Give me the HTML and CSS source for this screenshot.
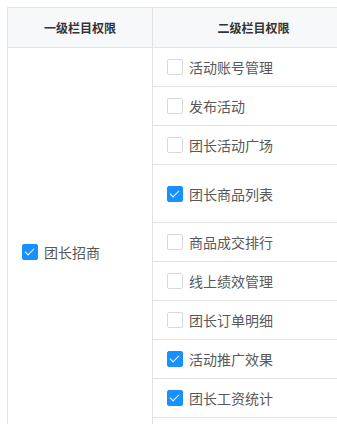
FILE: index.html
```html
<!DOCTYPE html>
<html lang="zh-CN">
<head>
    <meta charset="UTF-8">
    <meta name="viewport" content="width=device-width, initial-scale=1.0">
    <title>栏目权限</title>
    <link rel="stylesheet" href="styles.css">
</head>
<body>
    <table class="perm-table">
        <thead>
            <tr>
                <th class="col-first">一级栏目权限</th>
                <th class="col-second">二级栏目权限</th>
            </tr>
        </thead>
        <tbody>
            <tr>
                <td class="col-first" rowspan="10">
                    <label class="check-item"><span class="checkbox checked"></span>团长招商</label>
                </td>
                <td><label class="check-item"><span class="checkbox"></span>活动账号管理</label></td>
            </tr>
            <tr>
                <td><label class="check-item"><span class="checkbox"></span>发布活动</label></td>
            </tr>
            <tr>
                <td><label class="check-item"><span class="checkbox"></span>团长活动广场</label></td>
            </tr>
            <tr class="tall-row">
                <td><label class="check-item"><span class="checkbox checked"></span>团长商品列表</label></td>
            </tr>
            <tr>
                <td><label class="check-item"><span class="checkbox"></span>商品成交排行</label></td>
            </tr>
            <tr>
                <td><label class="check-item"><span class="checkbox"></span>线上绩效管理</label></td>
            </tr>
            <tr>
                <td><label class="check-item"><span class="checkbox"></span>团长订单明细</label></td>
            </tr>
            <tr>
                <td><label class="check-item"><span class="checkbox checked"></span>活动推广效果</label></td>
            </tr>
            <tr>
                <td><label class="check-item"><span class="checkbox checked"></span>团长工资统计</label></td>
            </tr>
            <tr>
                <td><label class="check-item"><span class="checkbox"></span></label></td>
            </tr>
        </tbody>
    </table>
</body>
</html>
```

FILE: styles.css
```css
body {
    margin: 7px 0 0 7px;
    font-family: "Noto Sans CJK SC", "Noto Sans", sans-serif;
    background-color: #fff;
    overflow: hidden;
}

.perm-table {
    width: 348px;
    border-collapse: collapse;
    table-layout: fixed;
}

.perm-table th,
.perm-table td {
    border: 1px solid #e3e3e3;
    padding: 0 14px;
    height: 38px;
    vertical-align: middle;
}

.perm-table th {
    height: 39px;
    background-color: #f7f8fa;
    color: #333;
    font-size: 12px;
    font-weight: bold;
    text-align: center;
}

.perm-table .col-first {
    width: 145px;
    padding-left: 14px;
    box-sizing: border-box;
}

.perm-table th.col-first {
    padding: 0;
}

.perm-table th.col-second {
    padding: 0;
}

.tall-row td {
    height: 57px;
}

.check-item {
    display: flex;
    align-items: center;
    gap: 6px;
    font-size: 14px;
    color: #595959;
    white-space: nowrap;
}

.checkbox {
    position: relative;
    width: 16px;
    height: 16px;
    box-sizing: border-box;
    border: 1px solid #d9d9d9;
    border-radius: 2px;
    background-color: #fff;
    flex-shrink: 0;
}

.checkbox.checked {
    background-color: #1890ff;
    border-color: #1890ff;
}

.checkbox.checked::after {
    content: "";
    position: absolute;
    left: 4px;
    top: 1px;
    width: 4px;
    height: 8px;
    border: solid #fff;
    border-width: 0 1.5px 1.5px 0;
    transform: rotate(45deg);
}
```
